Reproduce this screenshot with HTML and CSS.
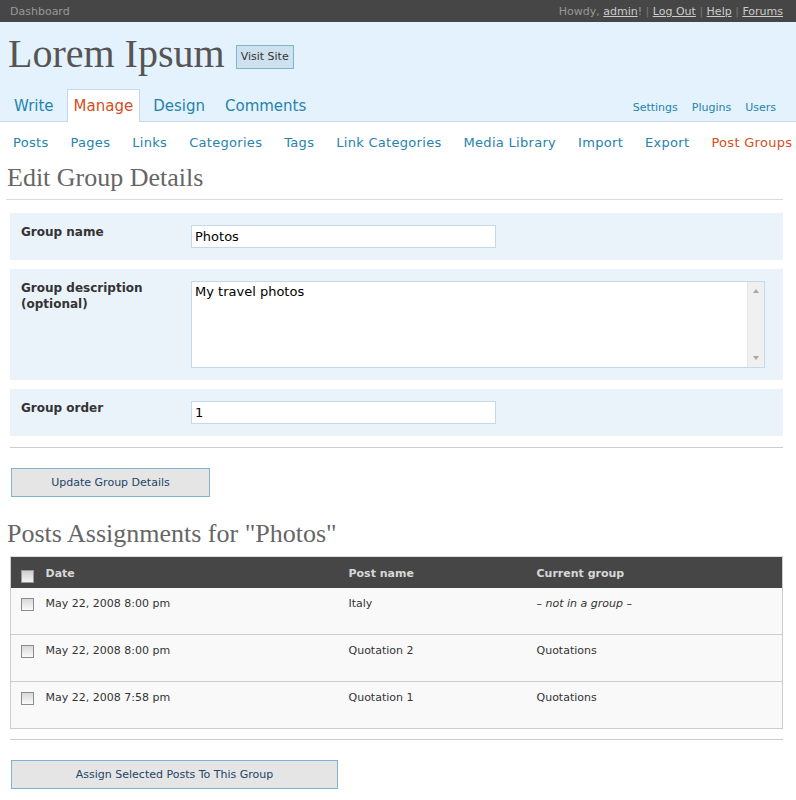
FILE: index.html
```html
<!DOCTYPE html>
<html lang="en">
<head>
    <meta charset="UTF-8">
    <title>Manage Post Groups &lsaquo; Lorem Ipsum</title>
    <link rel="stylesheet" href="styles.css">
</head>
<body>
    <div class="user-bar">
        <span class="dash">Dashboard</span>
        <span class="user-info">Howdy, <a href="#">admin</a>! <span class="sep">|</span> <a href="#">Log Out</a> <span class="sep">|</span> <a href="#">Help</a> <span class="sep">|</span> <a href="#">Forums</a></span>
    </div>

    <div class="head">
        <div class="site-title">
            <h1>Lorem Ipsum</h1>
            <a href="#" class="visit-site">Visit Site</a>
        </div>
        <div class="menu-row">
            <ul class="tabs">
                <li><a href="#">Write</a></li>
                <li class="current"><a href="#">Manage</a></li>
                <li><a href="#">Design</a></li>
                <li><a href="#">Comments</a></li>
            </ul>
            <ul class="side-menu">
                <li><a href="#">Settings</a></li>
                <li><a href="#">Plugins</a></li>
                <li><a href="#">Users</a></li>
            </ul>
        </div>
    </div>

    <ul class="submenu">
        <li><a href="#">Posts</a></li>
        <li><a href="#">Pages</a></li>
        <li><a href="#">Links</a></li>
        <li><a href="#">Categories</a></li>
        <li><a href="#">Tags</a></li>
        <li><a href="#">Link Categories</a></li>
        <li><a href="#">Media Library</a></li>
        <li><a href="#">Import</a></li>
        <li><a href="#">Export</a></li>
        <li class="current"><a href="#">Post Groups</a></li>
    </ul>

    <div class="wrap">
        <h2 class="ruled">Edit Group Details</h2>

        <div class="form-table">
            <div class="form-row">
                <label for="group-name">Group name</label>
                <input type="text" id="group-name" class="field" value="Photos">
            </div>
            <div class="form-row">
                <label for="group-desc">Group description (optional)</label>
                <div class="textarea-box">
                    <textarea id="group-desc">My travel photos</textarea>
                    <div class="scrollbar">
                        <span class="arrow up"></span>
                        <span class="arrow down"></span>
                    </div>
                </div>
            </div>
            <div class="form-row">
                <label for="group-order">Group order</label>
                <input type="text" id="group-order" class="field" value="1">
            </div>
        </div>

        <hr>
        <button class="button btn-update">Update Group Details</button>

        <h2 class="plain">Posts Assignments for "Photos"</h2>

        <table class="widefat">
            <thead>
                <tr>
                    <th class="check"><span class="cb"></span></th>
                    <th class="col-date">Date</th>
                    <th class="col-name">Post name</th>
                    <th>Current group</th>
                </tr>
            </thead>
            <tbody>
                <tr>
                    <td class="check"><span class="cb"></span></td>
                    <td>May 22, 2008 8:00 pm</td>
                    <td>Italy</td>
                    <td><em>&ndash; not in a group &ndash;</em></td>
                </tr>
                <tr>
                    <td class="check"><span class="cb"></span></td>
                    <td>May 22, 2008 8:00 pm</td>
                    <td>Quotation 2</td>
                    <td>Quotations</td>
                </tr>
                <tr>
                    <td class="check"><span class="cb"></span></td>
                    <td>May 22, 2008 7:58 pm</td>
                    <td>Quotation 1</td>
                    <td>Quotations</td>
                </tr>
            </tbody>
        </table>

        <hr class="after-table">
        <button class="button btn-assign">Assign Selected Posts To This Group</button>
    </div>
</body>
</html>
```

FILE: styles.css
```css
body {
    margin: 0;
    font-family: "DejaVu Sans", Verdana, sans-serif;
    color: #333;
    background: #fff;
}
a {
    text-decoration: none;
}
ul {
    list-style: none;
    margin: 0;
    padding: 0;
}

/* top bar */
.user-bar {
    display: flex;
    justify-content: space-between;
    height: 22px;
    line-height: 22px;
    padding: 1px 13px 0 10px;
    box-sizing: border-box;
    background: #464646;
    color: #999;
    font-size: 11px;
}
.user-bar a {
    color: #ccc;
    text-decoration: underline;
}
.user-bar .sep {
    color: #777;
}

/* header */
.head {
    background: #e4f2fd;
    border-bottom: 1px solid #c6d9e9;
    padding: 12px 13px 0 8px;
}
.site-title {
    display: flex;
    align-items: flex-start;
}
.site-title h1 {
    margin: 0;
    font-family: "Liberation Serif", Georgia, serif;
    font-weight: normal;
    font-size: 40px;
    line-height: 40px;
    color: #555;
}
.visit-site {
    margin: 11px 0 0 11px;
    padding: 0 4px;
    line-height: 22px;
    font-size: 11px;
    color: #333;
    background: #cee1ef;
    border: 1px solid #80b5d0;
}
.menu-row {
    display: flex;
    justify-content: space-between;
    margin-top: 15px;
}
.tabs {
    display: flex;
    margin-left: -1px;
}
.tabs li {
    margin: 0 6px -1px 0;
    padding: 7px 6px 6px;
    border: 1px solid transparent;
    border-bottom: none;
    font-size: 15px;
    line-height: 18px;
}
.tabs a {
    color: #2583ad;
}
.tabs li.current {
    background: #fff;
    border-color: #c6d9e9;
    padding-bottom: 7px;
}
.tabs li.current a {
    color: #d54e21;
}
.side-menu {
    display: flex;
    align-self: flex-end;
    gap: 14px;
    padding: 0 7px 6px 0;
    font-size: 11px;
    line-height: 14px;
}
.side-menu a {
    color: #2583ad;
}

/* sub menu */
.submenu {
    display: flex;
    gap: 22px;
    padding: 12px 0 0 13px;
    font-size: 13px;
    letter-spacing: 0.3px;
    line-height: 18px;
    white-space: nowrap;
}
.submenu a {
    color: #2583ad;
}
.submenu .current a {
    color: #d54e21;
}

/* content */
.wrap {
    padding: 0 13px 0 6px;
}
h2 {
    margin: 0;
    font-family: "Liberation Serif", Georgia, serif;
    font-weight: normal;
    font-size: 26px;
    line-height: 30px;
    color: #666;
}
h2.ruled {
    margin-top: 11px;
    padding: 0 0 6px 1px;
    border-bottom: 1px solid #dadada;
}
h2.plain {
    margin: 22px 0 7px 1px;
}

.form-table {
    display: flex;
    flex-direction: column;
    gap: 9px;
    margin: 13px 0 0 4px;
}
.form-row {
    display: grid;
    grid-template-columns: 170px 1fr;
    align-items: start;
    padding: 11px 18px 12px 11px;
    background: #eaf3fa;
}
.form-row label {
    font-size: 12px;
    font-weight: bold;
    line-height: 16px;
    padding-right: 20px;
}
.field {
    width: 305px;
    height: 23px;
    margin: 1px 0 0;
    padding: 0 3px;
    box-sizing: border-box;
    border: 1px solid #c6d9e9;
    font-family: "DejaVu Sans", Verdana, sans-serif;
    font-size: 13px;
    color: #000;
    background: #fff;
}
.textarea-box {
    display: flex;
    height: 87px;
    margin-top: 1px;
    box-sizing: border-box;
    border: 1px solid #c6d9e9;
    background: #fff;
}
.textarea-box textarea {
    flex: 1;
    border: none;
    resize: none;
    outline: none;
    overflow: hidden;
    padding: 2px 3px;
    font-family: "DejaVu Sans", Verdana, sans-serif;
    font-size: 13px;
    line-height: 16px;
    color: #000;
}
.scrollbar {
    position: relative;
    width: 16px;
    background: #f0f0f0;
    border-left: 1px solid #e6e6e6;
}
.arrow {
    position: absolute;
    left: 5px;
    width: 0;
    height: 0;
    border-left: 3px solid transparent;
    border-right: 3px solid transparent;
}
.arrow.up {
    top: 7px;
    border-bottom: 4px solid #a8a8a8;
}
.arrow.down {
    bottom: 7px;
    border-top: 4px solid #a8a8a8;
}

hr {
    margin: 11px 0 0 4px;
    height: 0;
    border: none;
    border-top: 1px solid #ccc;
}
hr.after-table {
    margin-top: 10px;
}
.button {
    display: block;
    margin: 20px 0 0 5px;
    height: 29px;
    border: 1px solid #80b3cf;
    background: #e5e5e5;
    color: #246;
    font-family: "DejaVu Sans", Verdana, sans-serif;
    font-size: 11px;
    padding: 0;
    cursor: pointer;
}
.btn-update {
    width: 199px;
}
.btn-assign {
    width: 327px;
}

/* posts table */
.widefat {
    width: calc(100% - 4px);
    margin-left: 4px;
    border-collapse: collapse;
    table-layout: fixed;
    border: 1px solid #ccc;
    border-top-color: #ddd;
    font-size: 11px;
    line-height: 14px;
}
.widefat th {
    height: 31px;
    padding: 10px 0 0;
    box-sizing: border-box;
    background: #464646;
    color: #d7d7d7;
    text-align: left;
    vertical-align: top;
}
.widefat td {
    height: 47px;
    padding: 9px 0 0;
    box-sizing: border-box;
    vertical-align: top;
    background: #f9f9f9;
    border-bottom: 1px solid #ccc;
    color: #333;
}
.widefat .check {
    width: 35px;
    padding-left: 10px;
}
.widefat .col-date {
    width: 303px;
}
.widefat .col-name {
    width: 188px;
}
.cb {
    display: block;
    width: 11px;
    height: 11px;
    margin-top: 1px;
    border: 1px solid #8c8c8c;
    background: linear-gradient(#d8d8d8, #fafafa);
}
.widefat th .cb {
    margin-top: 3px;
    border-color: #999;
    background: linear-gradient(#cfcfcf, #f2f2f2);
}
```
